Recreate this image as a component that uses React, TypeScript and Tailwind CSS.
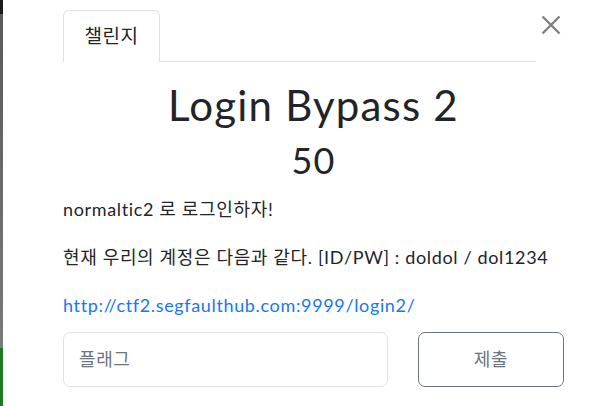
import { FC } from "react";

const font = "font-['Lato','Noto_Sans_CJK_KR',sans-serif]";

const CloseButton: FC = () => (
  <button className="mt-[15px] ml-[5px] mr-[3px] w-[20px] h-[20px] flex items-center justify-center">
    <svg width="20" height="20" viewBox="0 0 20 20">
      <path d="M1.5 1.5 L18.5 18.5 M18.5 1.5 L1.5 18.5" stroke="#808080" strokeWidth="2.4" />
    </svg>
  </button>
);

export default function App() {
  return (
    <div className={`w-[607px] h-[406px] bg-white flex overflow-hidden text-[#212529] ${font}`}>
      {/* page behind the modal */}
      <div className="w-[3px] flex flex-col">
        <div className="h-[14px] bg-[#1b1b1b]" />
        <div className="flex-1 bg-gradient-to-b from-[#5a5a5a] to-[#7a7a7a]" />
        <div className="h-[58px] bg-[#1a7a1e]" />
      </div>

      <div className="flex-1 pl-[60px] pr-[43px] flex flex-col">
        <div className="flex items-start">
          <div className="flex-1 flex items-end border-b border-[#dee2e6] mt-[10px]">
            <div className="w-[97px] h-[52px] -mb-px bg-white border border-[#dee2e6] border-b-white rounded-t-[6px] flex items-center justify-center text-[19px] tracking-[0.6px]">
              챌린지
            </div>
          </div>
          <CloseButton />
        </div>

        <h2 className="mt-[18px] text-center text-[42px] leading-[1.2] font-normal tracking-[1.2px]">Login Bypass 2</h2>
        <h3 className="mt-[9px] text-center text-[36px] leading-[1.2] font-normal tracking-[1px]">50</h3>

        <div className="mt-[13px] flex flex-col gap-[21px] text-[18px] leading-[27px] tracking-[0.65px]">
          <p>normaltic2 로 로그인하자!</p>
          <p>현재 우리의 계정은 다음과 같다. [ID/PW] : doldol / dol1234</p>
          <p>
            <a href="#" className="text-[#1777f5]">
              http://ctf2.segfaulthub.com:9999/login2/
            </a>
          </p>
        </div>

        <div className="mt-[13px] flex gap-[30px]">
          <input
            placeholder="플래그"
            className="w-[325px] h-[55px] px-[15px] border border-[#dee2e6] rounded-[7px] text-[18px] tracking-[0.6px] placeholder:text-[#6c757d] outline-none"
          />
          <button className="w-[146px] h-[55px] border border-[#6c757d] rounded-[7px] text-[18px] tracking-[0.6px] text-[#6c757d]">
            제출
          </button>
        </div>
      </div>
    </div>
  );
}
